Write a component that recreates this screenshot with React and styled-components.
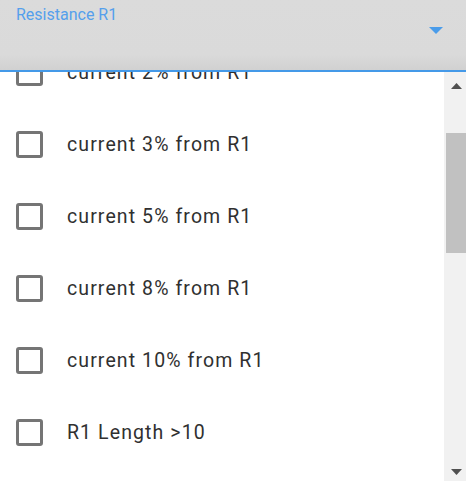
import { useLayoutEffect, useRef } from "react";
import styled, { createGlobalStyle } from "styled-components";

const GlobalStyle = createGlobalStyle`
    html, body {
        margin: 0;
        padding: 0;
        overflow: hidden;
        background: #ffffff;
        font-family: Roboto, "Liberation Sans", sans-serif;
    }
`;

const PageStyle = styled.main`
    display: flex;
    flex-direction: column;
    width: 466px;
`;

const SelectFieldStyle = styled.section`
    display: flex;
    justify-content: space-between;
    align-items: flex-start;
    height: 72px;
    padding: 5px 23px 0 16px;
    box-sizing: border-box;
    background: linear-gradient(to bottom, #dbdbdb 0, #dadada 78%, #d1d1d1 100%);
    border-bottom: 2px solid #4499e8;
`;

const SelectLabelStyle = styled.label`
    font-size: 16px;
    color: #559fec;
`;

const SelectArrowStyle = styled.svg`
    margin-top: 22px;
`;

const BodyStyle = styled.section`
    display: flex;
    height: 411px;
`;

const OptionListStyle = styled.ul`
    flex: 1;
    list-style: none;
    margin: 0;
    padding: 24px 0 9px 0;
    box-sizing: border-box;
    overflow: hidden;
`;

const OptionStyle = styled.li`
    display: flex;
    align-items: center;
    gap: 24px;
    height: 72px;
    padding-left: 16px;
`;

const CheckboxStyle = styled.span`
    display: block;
    width: 27px;
    height: 27px;
    box-sizing: border-box;
    border: 3px solid #757575;
    border-radius: 3px;
    flex-shrink: 0;
`;

const OptionTextStyle = styled.span`
    font-size: 19.5px;
    letter-spacing: 1.1px;
    color: #303030;
`;

const ScrollbarStyle = styled.div`
    display: flex;
    flex-direction: column;
    width: 22px;
    flex-shrink: 0;
    background-color: #f1f1f1;
`;

const ScrollButtonStyle = styled.div`
    display: flex;
    justify-content: flex-start;
    align-items: flex-start;
    height: 22px;
    padding: ${(props) => props.$top}px 0 0 7px;
    box-sizing: border-box;
    flex-shrink: 0;
`;

const ScrollTrackStyle = styled.div`
    flex: 1;
    display: flex;
    flex-direction: column;
`;

const ScrollThumbStyle = styled.div`
    margin-left: 2px;
    background-color: #c1c1c1;
`;

const options = [
    "current 1% from R1",
    "current 2% from R1",
    "current 3% from R1",
    "current 5% from R1",
    "current 8% from R1",
    "current 10% from R1",
    "R1 Length >10",
    "R1 Length >20",
    "R1 Length >30",
    "R1 Length >50",
    "R1 Length >100",
    "R1 Width >10",
    "R1 Width >20",
    "R1 Width >50",
    "R1 Area >100",
    "R1 Area >500",
    "R1 Area >1000",
];

const VIEW_HEIGHT = 411;
const SCROLL_TOP = 132;
const TRACK_HEIGHT = VIEW_HEIGHT - 44;
const CONTENT_HEIGHT = 24 + options.length * 72 + 9;
const THUMB_HEIGHT = (TRACK_HEIGHT * VIEW_HEIGHT) / CONTENT_HEIGHT;
const THUMB_TOP =
    (SCROLL_TOP / (CONTENT_HEIGHT - VIEW_HEIGHT)) * (TRACK_HEIGHT - THUMB_HEIGHT);

function App() {
    const listRef = useRef(null);

    useLayoutEffect(() => {
        if (listRef.current) listRef.current.scrollTop = SCROLL_TOP;
    }, []);

    return (
        <>
            <GlobalStyle />
            <PageStyle>
                <SelectFieldStyle>
                    <SelectLabelStyle>Resistance R1</SelectLabelStyle>
                    <SelectArrowStyle width="14" height="7" viewBox="0 0 14 7">
                        <path d="M0 0 L14 0 L7 7 Z" fill="#4a9cea" />
                    </SelectArrowStyle>
                </SelectFieldStyle>
                <BodyStyle>
                    <OptionListStyle ref={listRef}>
                        {options.map((option) => (
                            <OptionStyle key={option}>
                                <CheckboxStyle />
                                <OptionTextStyle>{option}</OptionTextStyle>
                            </OptionStyle>
                        ))}
                    </OptionListStyle>
                    <ScrollbarStyle>
                        <ScrollButtonStyle $top={11}>
                            <svg width="11" height="6" viewBox="0 0 11 6">
                                <path d="M0 6 L5.5 0 L11 6 Z" fill="#505050" />
                            </svg>
                        </ScrollButtonStyle>
                        <ScrollTrackStyle>
                            <ScrollThumbStyle
                                style={{ marginTop: THUMB_TOP, height: THUMB_HEIGHT }}
                            />
                        </ScrollTrackStyle>
                        <ScrollButtonStyle $top={8}>
                            <svg width="11" height="6" viewBox="0 0 11 6">
                                <path d="M0 0 L11 0 L5.5 6 Z" fill="#505050" />
                            </svg>
                        </ScrollButtonStyle>
                    </ScrollbarStyle>
                </BodyStyle>
            </PageStyle>
        </>
    );
}

export default App;
